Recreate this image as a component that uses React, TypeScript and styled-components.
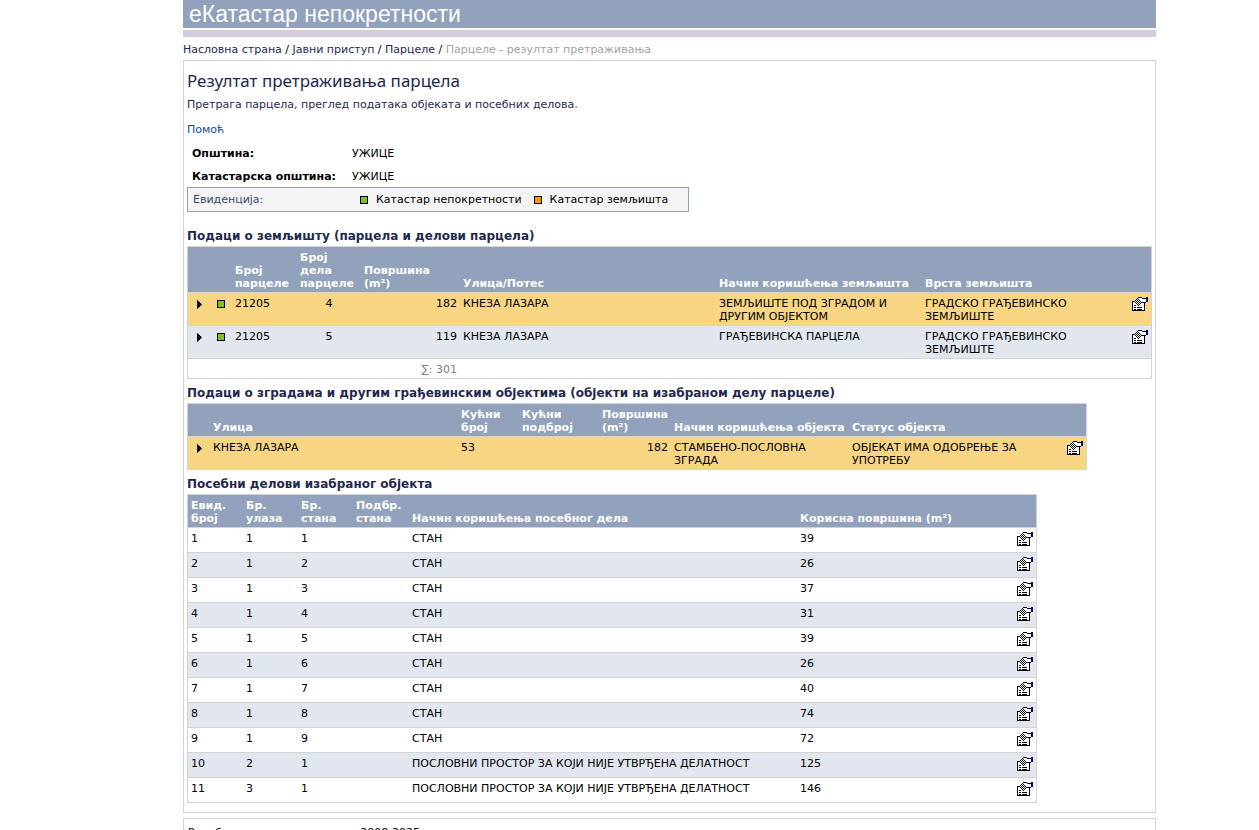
import React from 'react';
import styled, { createGlobalStyle } from 'styled-components';

const GlobalStyle = createGlobalStyle`
  body {
    margin: 0;
    background: #fff;
    color: #000;
    font: 11px/13px Verdana, "DejaVu Sans", sans-serif;
  }
`;

const Page = styled.div`
  padding: 0 103px 0 183px;
`;

const Banner = styled.header`
  height: 28px;
  padding-left: 6px;
  background: #92a1bc;
  color: #fff;
  font: 23px/28px "Liberation Sans", Arial, sans-serif;
  white-space: nowrap;
`;

const Stripe = styled.div`
  height: 7px;
  margin-top: 2px;
  background: #d5cbdd;
`;

const Breadcrumb = styled.nav`
  padding: 6px 0 4px;
  white-space: nowrap;
`;

const Crumb = styled.a`
  color: #1f2950;
  text-decoration: none;
`;

const CurrentCrumb = styled.span`
  color: #a3a3a3;
`;

const Panel = styled.main`
  padding: 8px 3px 9px;
  border: 1px solid #d3d3d3;
`;

const Title = styled.h1`
  margin: 0;
  color: #1f2950;
  font-family: "Noto Sans", sans-serif;
  font-size: 17px;
  font-weight: 400;
  line-height: 24px;
`;

const Intro = styled.p`
  margin: 5px 0 12px;
  color: #1f2950;
`;

const HelpLink = styled.a`
  color: #0b4bb5;
  text-decoration: none;
`;

const Details = styled.dl`
  display: grid;
  grid-template-columns: 160px 1fr;
  row-gap: 10px;
  margin: 11px 0 4px;
  padding-left: 5px;
`;

const Term = styled.dt`
  font-weight: 700;
`;

const Value = styled.dd`
  margin: 0;
`;

const Legend = styled.div`
  display: flex;
  align-items: center;
  box-sizing: border-box;
  max-width: 502px;
  height: 25px;
  padding-left: 5px;
  border: 1px solid #92a1bc;
  background: #f4f4f4;
  white-space: nowrap;
`;

const LegendLabel = styled.span`
  flex: 0 0 167px;
  color: #34496f;
`;

const LegendItem = styled.span`
  display: flex;
  align-items: center;
  gap: 8px;
  margin-right: 12px;
`;

const Marker = styled.span<{ $color: string }>`
  display: block;
  flex: none;
  box-sizing: border-box;
  width: 8px;
  height: 8px;
  border: 1px solid #000;
  background: ${(p) => p.$color};
`;

const SectionTitle = styled.h2<{ $first?: boolean }>`
  margin: ${(p) => (p.$first ? '16px' : '6px')} 0 2px;
  color: #1f2950;
  font-size: 12px;
  font-weight: 700;
  line-height: 16px;
`;

const Grid = styled.table<{ $width: string }>`
  width: ${(p) => p.$width};
  border: 1px solid #d3d3d3;
  border-spacing: 0;
  table-layout: fixed;
`;

const Col = styled.col<{ $w?: number }>`
  width: ${(p) => (p.$w ? `${p.$w}px` : 'auto')};
`;

const Head = styled.th`
  padding: 4px 3px 2px;
  background: #92a1bc;
  color: #fff;
  font-weight: 700;
  text-align: left;
  vertical-align: bottom;
  white-space: pre-line;
`;

const rowColors = { selected: '#f8d583', shaded: '#e2e7ef', plain: '#fff' };
type Tone = keyof typeof rowColors;

const Row = styled.tr<{ $tone: Tone }>`
  background: ${(p) => rowColors[p.$tone]};
`;

const Cell = styled.td<{ $align?: 'center' | 'right' }>`
  padding: 4px 3px 2px;
  border-top: 1px solid #d3d3d3;
  text-align: ${(p) => p.$align ?? 'left'};
  vertical-align: top;
  white-space: pre-line;
`;

const SumCell = styled(Cell)`
  color: #808080;
`;

const ToolCell = styled(Cell)`
  padding: 0;
`;

const IconButton = styled.button`
  display: block;
  width: 22px;
  height: 24px;
  padding: 4px 3px 6px;
  border: 0;
  background: none;
  cursor: pointer;
`;

const Svg = styled.svg`
  display: block;
`;

const ArrowButton = styled(IconButton)`
  padding: 7px 8px 8px 9px;
`;

const MarkerCell = styled(Cell)`
  padding: 7px 3px;
`;

const Footer = styled.footer`
  margin-top: 5px;
  padding: 7px 4px;
  border: 1px solid #d3d3d3;
`;

/* k = outline, w = paper, n = cuff */
const detailBitmap = [
  '......kkkk....nn',
  '.....kwwwwkkkknn',
  '....kwkwwwwwwwnn',
  '...kwkwkwwwwwwnn',
  'kkkwkwkwkwwwwwnn',
  'kwwkwkwkwkkkkk..',
  'kwwwkwkwkwwwk...',
  'kwwwwkwkwwwwk...',
  'kwkkwwkwwwwwk...',
  'kwwwwwwwwwwwk...',
  'kwkkwkkkkkwwk...',
  'kwwwwwwwwwwwk...',
  'kwkkwkkkkkwwk...',
  'kkkkkkkkkkkkk...',
];
const inks: Record<string, string> = { k: '#000', w: '#fff', n: '#000080' };

const pathFor = (ink: string) =>
  detailBitmap
    .flatMap((line, y) => [...line].map((c, x) => (c === ink ? `M${x} ${y}h1v1h-1z` : '')))
    .join('');

const DetailIcon = () => (
  <Svg width="16" height="14" viewBox="0 0 16 14" shapeRendering="crispEdges" aria-hidden="true">
    {Object.entries(inks).map(([ink, fill]) => (
      <path key={ink} d={pathFor(ink)} fill={fill} />
    ))}
  </Svg>
);

const Detail = () => (
  <ToolCell>
    <IconButton type="button" aria-label="Детаљи">
      <DetailIcon />
    </IconButton>
  </ToolCell>
);

const Select = () => (
  <ToolCell>
    <ArrowButton type="button" aria-label="Изабери">
      <Svg width="5" height="9" viewBox="0 0 5 9" shapeRendering="crispEdges" aria-hidden="true">
        <path d="M0 0h1v1h1v1h1v1h1v1h1v1h-1v1h-1v1h-1v1h-1v1h-1z" />
      </Svg>
    </ArrowButton>
  </ToolCell>
);

const parcels: { tone: Tone; part: string; area: string; use: string }[] = [
  { tone: 'selected', part: '4', area: '182', use: 'ЗЕМЉИШТЕ ПОД ЗГРАДОМ И\nДРУГИМ ОБЈЕКТОМ' },
  { tone: 'shaded', part: '5', area: '119', use: 'ГРАЂЕВИНСКА ПАРЦЕЛА' },
];

const flat = 'СТАН';
const office = 'ПОСЛОВНИ ПРОСТОР ЗА КОЈИ НИЈЕ УТВРЂЕНА ДЕЛАТНОСТ';
const units: [number, number, number, string, number][] = [
  [1, 1, 1, flat, 39],
  [2, 1, 2, flat, 26],
  [3, 1, 3, flat, 37],
  [4, 1, 4, flat, 31],
  [5, 1, 5, flat, 39],
  [6, 1, 6, flat, 26],
  [7, 1, 7, flat, 40],
  [8, 1, 8, flat, 74],
  [9, 1, 9, flat, 72],
  [10, 2, 1, office, 125],
  [11, 3, 1, office, 146],
];

const Columns = ({ widths }: { widths: (number | undefined)[] }) => (
  <colgroup>
    {widths.map((w, i) => (
      <Col key={i} $w={w} />
    ))}
  </colgroup>
);

const HeadRow = ({ labels }: { labels: string[] }) => (
  <thead>
    <tr>
      {labels.map((label, i) => (
        <Head key={i} scope="col">
          {label}
        </Head>
      ))}
    </tr>
  </thead>
);

export default function App() {
  return (
    <>
      <GlobalStyle />
      <Page>
        <Banner>еКатастар непокретности</Banner>
        <Stripe />
        <Breadcrumb>
          <Crumb href="#">Насловна страна</Crumb> / <Crumb href="#">Јавни приступ</Crumb> /{' '}
          <Crumb href="#">Парцеле</Crumb> / <CurrentCrumb>Парцеле - резултат претраживања</CurrentCrumb>
        </Breadcrumb>
        <Panel>
          <Title>Резултат претраживања парцела</Title>
          <Intro>Претрага парцела, преглед података објеката и посебних делова.</Intro>
          <HelpLink href="#">Помоћ</HelpLink>
          <Details>
            <Term>Општина:</Term>
            <Value>УЖИЦЕ</Value>
            <Term>Катастарска општина:</Term>
            <Value>УЖИЦЕ</Value>
          </Details>
          <Legend>
            <LegendLabel>Евиденција:</LegendLabel>
            <LegendItem>
              <Marker $color="#7fbf26" />
              Катастар непокретности
            </LegendItem>
            <LegendItem>
              <Marker $color="#f79a0e" />
              Катастар земљишта
            </LegendItem>
          </Legend>

          <SectionTitle $first>Подаци о земљишту (парцела и делови парцела)</SectionTitle>
          <Grid $width="100%">
            <Columns widths={[26, 18, 65, 64, 99, undefined, 206, 207, 22]} />
            <HeadRow
              labels={['', '', 'Број\nпарцеле', 'Број\nдела\nпарцеле', 'Површина\n(m²)', 'Улица/Потес', 'Начин коришћења земљишта', 'Врста земљишта', '']}
            />
            <tbody>
              {parcels.map((p) => (
                <Row key={p.part} $tone={p.tone}>
                  <Select />
                  <MarkerCell>
                    <Marker $color="#7fbf26" />
                  </MarkerCell>
                  <Cell>21205</Cell>
                  <Cell $align="center">{p.part}</Cell>
                  <Cell $align="right">{p.area}</Cell>
                  <Cell>КНЕЗА ЛАЗАРА</Cell>
                  <Cell>{p.use}</Cell>
                  <Cell>{'ГРАДСКО ГРАЂЕВИНСКО\nЗЕМЉИШТЕ'}</Cell>
                  <Detail />
                </Row>
              ))}
              <Row $tone="plain">
                <SumCell colSpan={5} $align="right">
                  ∑: 301
                </SumCell>
                <SumCell colSpan={4} />
              </Row>
            </tbody>
          </Grid>

          <SectionTitle>Подаци о зградама и другим грађевинским објектима (објекти на изабраном делу парцеле)</SectionTitle>
          <Grid $width="900px">
            <Columns widths={[22, 248, 61, 80, 72, 178, undefined, 22]} />
            <HeadRow
              labels={['', 'Улица', 'Кућни\nброј', 'Кућни\nподброј', 'Површина\n(m²)', 'Начин коришћења објекта', 'Статус објекта', '']}
            />
            <tbody>
              <Row $tone="selected">
                <Select />
                <Cell>КНЕЗА ЛАЗАРА</Cell>
                <Cell>53</Cell>
                <Cell />
                <Cell $align="right">182</Cell>
                <Cell>{'СТАМБЕНО-ПОСЛОВНА\nЗГРАДА'}</Cell>
                <Cell>{'ОБЈЕКАТ ИМА ОДОБРЕЊЕ ЗА\nУПОТРЕБУ'}</Cell>
                <Detail />
              </Row>
            </tbody>
          </Grid>

          <SectionTitle>Посебни делови изабраног објекта</SectionTitle>
          <Grid $width="850px">
            <Columns widths={[55, 55, 55, 56, 388, undefined, 22]} />
            <HeadRow
              labels={['Евид.\nброј', 'Бр.\nулаза', 'Бр.\nстана', 'Подбр.\nстана', 'Начин коришћења посебног дела', 'Корисна површина (m²)', '']}
            />
            <tbody>
              {units.map(([id, entrance, unit, use, area]) => (
                <Row key={id} $tone={id % 2 ? 'plain' : 'shaded'}>
                  <Cell>{id}</Cell>
                  <Cell>{entrance}</Cell>
                  <Cell>{unit}</Cell>
                  <Cell />
                  <Cell>{use}</Cell>
                  <Cell>{area}</Cell>
                  <Detail />
                </Row>
              ))}
            </tbody>
          </Grid>
        </Panel>
        <Footer>Републички геодетски завод 2008-2025</Footer>
      </Page>
    </>
  );
}
